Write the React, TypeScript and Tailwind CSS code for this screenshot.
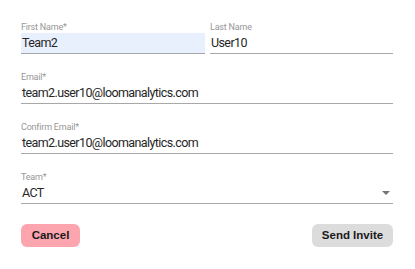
const font = { fontFamily: "Roboto, 'Liberation Sans', sans-serif" };

type FieldProps = {
  label: string;
  value: string;
  filled?: boolean;
  select?: boolean;
  className?: string;
};

const Field = ({ label, value, filled, select, className }: FieldProps) => (
  <div className={className}>
    <div className="text-[9px] leading-[12px] tracking-[-0.2px] text-[#969696]">{label}</div>
    <div
      className={`h-[21px] flex items-center justify-between border-b border-[#a8a8a8] pl-[1px] pr-[2px] ${
        filled ? "bg-[#e8f0fe]" : ""
      }`}
    >
      <span className="text-[12.5px] leading-[16px] tracking-[-0.6px] text-[#262626]">{value}</span>
      {select && (
        <svg width="8" height="4" viewBox="0 0 10 5" className="mr-[1px]">
          <path d="M0 0l5 5 5-5z" fill="#757575" />
        </svg>
      )}
    </div>
  </div>
);

export default function App() {
  return (
    <div className="w-[415px] h-[269px] bg-white pt-[21px] px-[21px]" style={font}>
      <div className="w-[372px] flex flex-col gap-[17px]">
        <div className="flex gap-[5px]">
          <Field label="First Name*" value="Team2" filled className="w-[184px]" />
          <Field label="Last Name" value="User10" className="w-[183px]" />
        </div>
        <Field label="Email*" value="team2.user10@loomanalytics.com" />
        <Field label="Confirm Email*" value="team2.user10@loomanalytics.com" />
        <Field label="Team*" value="ACT" select />
      </div>
      <div
        className="w-[372px] flex justify-between mt-[20px]"
        style={{ fontFamily: "'Liberation Sans', Arial, sans-serif" }}
      >
        <button className="w-[59px] h-[23px] rounded-[6px] bg-[#fca5ae] text-[11.5px] font-bold text-[#1a1a1a]">
          Cancel
        </button>
        <button className="w-[81px] h-[23px] rounded-[6px] bg-[#dcdcdc] text-[11.5px] font-bold text-[#1a1a1a]">
          Send Invite
        </button>
      </div>
    </div>
  );
}
